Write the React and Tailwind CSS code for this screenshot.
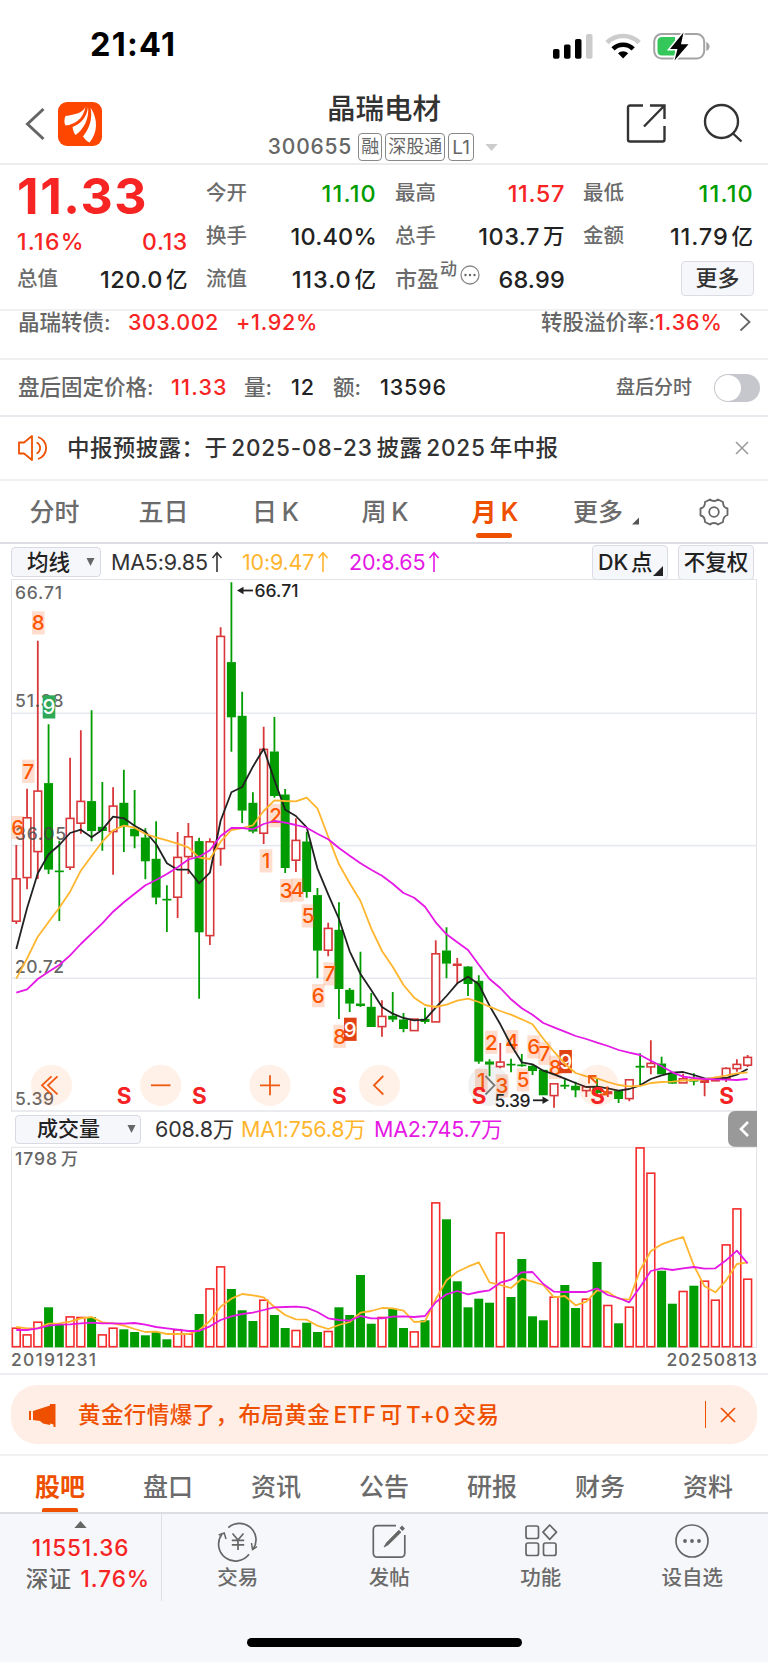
import React from "react";

const X0 = 16.3;
const STEP = 10.755;
const cx = (i) => X0 + i * STEP;
const RED = "#d9383a";
const GREEN = "#009c00";

// Each candle: [direction, high, body top, body bottom, low] in chart canvas units.
const candles = [
  ["r", 845, 878.7, 921.3, 924], ["r", 788.7, 817.7, 877.7, 889.3], ["r", 640.7, 791, 851.7, 879],
  ["g", 724.3, 783.3, 869.3, 874], ["g", 840.7, 870.7, 871.9, 921], ["r", 757.7, 818.3, 867.3, 870],
  ["r", 730.3, 801.3, 823.3, 833.7], ["g", 710.3, 801.3, 830.7, 841.3], ["g", 782, 827, 830.7, 850.7],
  ["r", 787.3, 806, 831.7, 874.7], ["g", 769.7, 803, 826.3, 852], ["g", 790, 829, 836, 848.3],
  ["g", 828.3, 837.7, 861, 879.3], ["g", 821.3, 859, 897.3, 904.3], ["g", 885.3, 899, 900.2, 932],
  ["r", 832, 857.3, 897.3, 918], ["r", 823, 836.7, 856.7, 874], ["g", 837.7, 841.3, 932, 998.7],
  ["r", 838.3, 841.7, 935.7, 945], ["r", 627.3, 636.3, 848.7, 865.7], ["g", 582.3, 662.3, 717, 751.7],
  ["g", 691.7, 716, 810.3, 823], ["g", 792.3, 803, 831.3, 833.3], ["r", 726.7, 749.3, 833.3, 844],
  ["g", 717, 751.7, 795.7, 797.7], ["g", 789, 794.7, 867.7, 873], ["r", 818.3, 840.3, 860.3, 872],
  ["g", 831.7, 841.7, 891.7, 897.7], ["g", 888, 895.3, 950.3, 978.3], ["r", 922.7, 928.3, 950.3, 956.3],
  ["g", 902.3, 930, 988.7, 1019], ["g", 988, 990, 1003.3, 1012], ["g", 951.7, 1003.7, 1005.7, 1007],
  ["g", 993, 1007, 1026.7, 1026.7], ["r", 1000.3, 1016.3, 1026.7, 1036.7], ["g", 992, 1016, 1019.3, 1022],
  ["g", 1013, 1019.7, 1028.7, 1032.3], ["r", 1019, 1019, 1030.7, 1030.7], ["g", 1007.7, 1019, 1021.7, 1023.7],
  ["r", 940.3, 953.7, 1022, 1022], ["g", 927.3, 950.7, 963.3, 978.3], ["r", 958, 963.7, 965.7, 983.3],
  ["g", 966, 966.7, 983.7, 996], ["g", 975.3, 981, 1061.3, 1063.7], ["g", 1059.3, 1061.7, 1064.3, 1076.3],
  ["r", 1043, 1062, 1066.7, 1068.3], ["g", 1058.7, 1064, 1065, 1072.3], ["g", 1054, 1064.7, 1065.7, 1066.7],
  ["g", 1064.3, 1066, 1070.7, 1075], ["g", 1070, 1070, 1095, 1095], ["r", 1083.7, 1083.7, 1095.7, 1107.7],
  ["g", 1079.3, 1085, 1086.3, 1089], ["g", 1081.7, 1086, 1090, 1097.3], ["r", 1086.7, 1086.7, 1090.7, 1097],
  ["g", 1078.7, 1086.7, 1092.7, 1096], ["r", 1086.7, 1091.3, 1094, 1097], ["g", 1090, 1090.7, 1098.7, 1103],
  ["r", 1079.3, 1079.7, 1098.7, 1101.3], ["g", 1053.3, 1066, 1067.3, 1086.3], ["r", 1040.3, 1063.3, 1067, 1074.3],
  ["g", 1056.7, 1063.7, 1074, 1074], ["g", 1072.7, 1074, 1083.3, 1084], ["r", 1073.7, 1078.7, 1083, 1083],
  ["g", 1073.3, 1079, 1081.3, 1085.3], ["r", 1079.3, 1080, 1082.7, 1096.3], ["r", 1076.7, 1079.7, 1081.3, 1081.3],
  ["r", 1067.3, 1068.3, 1078.7, 1082], ["r", 1059.3, 1064.3, 1068.7, 1071.7], ["r", 1055, 1057.3, 1065.3, 1067],
];

const ma5 = [949, 908, 873.3, 854.3, 845, 833, 829.7, 837.3, 829.7, 816.7, 818.3, 825.7, 831.7, 844, 863.3, 869.7, 869.7, 883.3, 872.7, 820.7, 792.3, 787, 766.7, 748.7, 780, 809.7, 816, 827.3, 868.3, 894.3, 919, 951.3, 974, 990, 1007, 1013.7, 1018, 1020.3, 1019.7, 1007.7, 996, 983.3, 976.7, 984.3, 1005.7, 1024.3, 1045, 1062.3, 1064.3, 1070.7, 1074.3, 1078.7, 1083, 1087, 1086.7, 1088.3, 1090.7, 1089, 1085.3, 1079, 1075.3, 1072.7, 1072, 1075, 1078.3, 1078.7, 1078, 1074.7, 1069];
const ma10 = [978.7, 958.3, 936.7, 922, 907.7, 891.7, 870.7, 856, 841.7, 830.3, 825.7, 827.7, 834, 837.3, 840.3, 843.7, 847.3, 857.7, 859, 841.7, 830, 828, 825.3, 811, 800.3, 801, 801.3, 797.7, 808.3, 836.7, 864.3, 883.3, 901, 928.3, 951, 966.7, 985, 997.7, 1005, 1007, 1004.7, 1000.7, 998.7, 1002, 1006.7, 1011, 1014.7, 1019.3, 1024.3, 1038.7, 1051.7, 1063.7, 1073, 1076.3, 1078.3, 1082, 1085, 1086.3, 1086, 1083, 1082, 1081.7, 1080.7, 1080, 1079.3, 1077.3, 1075.7, 1073.3, 1072.3];
const ma20 = [992.7, 989.3, 979, 971.7, 965, 955.3, 944, 933.7, 923.3, 911.7, 902.3, 893.7, 885.3, 880, 874, 867.3, 859.5, 856.7, 850.3, 836, 828, 828, 829.3, 824, 821, 822.7, 825, 827.7, 833.7, 839.3, 848, 855.7, 863.3, 869.7, 875.7, 883.7, 893, 897.7, 906.7, 922.3, 934.3, 942.3, 950, 964.7, 979, 988, 999.3, 1008.3, 1014.7, 1023, 1027.3, 1031.7, 1036, 1039, 1042.7, 1046, 1050, 1052.7, 1055, 1060.7, 1066.3, 1072.3, 1076.7, 1078, 1079, 1079.3, 1079.7, 1080, 1079];

// Top of each volume bar.
const volTops = [1328, 1334.7, 1322, 1307.3, 1324.3, 1316.7, 1317.3, 1317.3, 1334.7, 1328, 1329.3, 1332, 1335.3, 1332, 1339.3, 1329.7, 1333.7, 1314, 1288.7, 1266.7, 1289, 1310.3, 1321, 1300, 1315, 1328, 1330.3, 1322.7, 1332, 1331.3, 1307.3, 1315, 1275, 1323.7, 1317.3, 1308.7, 1328, 1331.7, 1320.3, 1202.7, 1219.3, 1281.3, 1307.3, 1298.7, 1302.7, 1232.7, 1297, 1259, 1316.3, 1320.3, 1297, 1285, 1308, 1299, 1262, 1305.3, 1323.3, 1307, 1147.7, 1173, 1270.7, 1303.7, 1291.3, 1285.7, 1281, 1300, 1244.7, 1208.7, 1279];
const volColors = "rrrggrrgrrgggggrrgrrgggrggrggrggggrggrgrgggggrggggrggrgrgrrrggrgrrrrr".split("");
const volMa1 = [651, 655, 655, 641, 640, 635, 625, 621, 637, 640, 647, 657, 666, 665, 672, 672, 672, 661, 633, 590, 566, 552, 556, 562, 591, 615, 628, 629, 647, 657, 645, 636, 608, 603, 594, 595, 602, 636, 634, 568, 511, 485, 470, 457, 517, 525, 534, 506, 515, 525, 562, 558, 586, 575, 541, 546, 566, 569, 480, 424, 403, 391, 381, 467, 529, 547, 511, 462, 457];
const volMa2 = [660, 660, 655, 647, 644, 643, 640, 638, 640, 640, 641, 639, 644, 651, 655, 659, 663, 663, 649, 630, 619, 612, 608, 600, 592, 591, 590, 593, 606, 625, 630, 632, 618, 625, 625, 620, 619, 621, 618, 577, 553, 543, 553, 546, 541, 518, 509, 487, 486, 522, 545, 546, 546, 546, 535, 555, 564, 577, 531, 483, 475, 480, 475, 471, 476, 475, 451, 422, 460];

const line = (ys) => ys.map((y, i) => `${cx(i).toFixed(1)},${y}`).join(" ");
const volLine = (ys) => line(ys.map((v) => (1110 + v / 3).toFixed(1)));

const counts = [
  ["6", 11.5, 816], ["7", 22, 759.7], ["8", 32, 611.3], ["9", 42.7, 695.3, "#2fa858"],
  ["1", 259.7, 849.3], ["2", 269.3, 804], ["3", 280, 879], ["4", 291.3, 878.3], ["5", 301.7, 904.3],
  ["6", 312, 984], ["7", 323.3, 962.3], ["8", 333.3, 1024.7], ["9", 344, 1017.7, "#e04214"],
  ["1", 475, 1069], ["2", 485, 1030.7], ["3", 495.7, 1074.3], ["4", 505.7, 1030], ["5", 516.7, 1068.3],
  ["6", 527.3, 1035.3], ["7", 538.3, 1041.7], ["8", 549, 1055.7], ["9", 559.3, 1050, "#e04214"],
];

function AxisText({ x, y, w, children }) {
  return (
    <text x={x} y={y + 6.3} textLength={w} fontSize="17.5" fontWeight="500" fill="#444" fillOpacity="0.82">{children}</text>
  );
}

function PriceChart() {
  return (
    <svg viewBox="0 579 768 532" className="block h-[532px] w-[768px] overflow-visible">
      <path d="M11.5 1111V579.5H756.5V1111" fill="none" stroke="#e3e4ea" />
      <path d="M11 1111H757" stroke="#e3e4ea" strokeWidth="1.5" />
      {[713.2, 845.6, 978.2].map((y) => <path key={y} d={`M12 ${y}H756`} stroke="#e6e9f0" strokeWidth="1.6" />)}
      {candles.map(([c, h, t, b, l], i) => {
        const x = cx(i);
        const col = c === "r" ? RED : GREEN;
        const hh = Math.max(b - t, 1.2);
        return (
          <g key={i}>
            <path d={`M${x} ${h}V${t}M${x} ${b}V${l}`} stroke={col} strokeWidth="1.8" />
            {c === "r" && hh > 3.5
              ? <rect x={x - 3.8} y={t + 0.1} width="7.6" height={hh - 0.2} fill="#fff" stroke={col} strokeWidth="1.6" />
              : <rect x={x - 4.5} y={t - 0.2} width="9" height={hh + 0.5} fill={col} />}
          </g>
        );
      })}
      <AxisText x={15} y={593} w={47}>66.71</AxisText>
      <AxisText x={15} y={700.5} w={48.5}>51.38</AxisText>
      <AxisText x={15} y={833.5} w={51}>36.05</AxisText>
      <AxisText x={15} y={966.5} w={49}>20.72</AxisText>
      <AxisText x={15} y={1099} w={39}>5.39</AxisText>
      <g fontSize="20.5" fontWeight="500" textAnchor="middle">
        {counts.map(([n, x, y, bg], i) => (
          <g key={i}>
            <rect x={x} y={y} width="12.6" height="23.2" fill={bg || "#ff5a10"} fillOpacity={bg ? 1 : 0.2} />
            <text x={x + 6.3} y={y + 19} fill={bg ? "#fff" : "#ff5500"}>{n}</text>
          </g>
        ))}
      </g>
      <g fill="none" strokeWidth="1.8" strokeLinejoin="round">
        <polyline points={line(ma5)} stroke="#222" />
        <polyline points={line(ma10)} stroke="#ffb52e" />
        <polyline points={line(ma20)} stroke="#e518e5" />
      </g>
      <g fontSize="17.5" fontWeight="500" fill="#222">
        <path d="M242 590.5H253" stroke="#222" strokeWidth="1.8" />
        <path d="M237 590.5L243.5 586.8V594.2Z" />
        <text x="254.5" y="597" textLength="44">66.71</text>
        <text x="494.5" y="1107" textLength="36">5.39</text>
        <path d="M533 1100.3H544" stroke="#222" strokeWidth="1.8" />
        <path d="M549 1100.3L542.5 1096.6V1104Z" />
      </g>
      {[51.5, 160.7, 270, 379.5, 488.7, 598].map((x, i) => (
        <circle key={x} cx={x} cy="1085.3" r="20.6" fill={i === 4 ? "#777" : "#ff6a20"} fillOpacity="0.1" />
      ))}
      <g fill="none" stroke="#f05a10" strokeWidth="1.8">
        <path d="M51.5 1076.3L42 1085.3L51.5 1094.3M57.5 1076.3L48 1085.3L57.5 1094.3" />
        <path d="M151 1085.3H170.5" />
        <path d="M260 1085.3H280M270 1075.3V1095.3" />
        <path d="M383.3 1076L374 1085.3L383.3 1094.5" />
        <path d="M485.5 1076L494.5 1085.3L485.5 1094.5" stroke="#777" />
        <path d="M589 1083.5V1076H596.5M589 1076L597 1083.5M607 1086.5V1094.5H600M607 1094.5L599.5 1087.5" />
      </g>
      <g fontSize="22.5" fontWeight="700" fill="#f52323" textAnchor="middle">
        {[124, 199.3, 339.3, 479, 597.7, 726.7].map((x) => <text key={x} x={x} y="1103.9">S</text>)}
      </g>
    </svg>
  );
}

function VolumeChart() {
  return (
    <svg viewBox="0 1147 768 201" className="block h-[201px] w-[768px] overflow-visible">
      <path d="M11.5 1347.5V1147.3H756.5V1347.5Z" fill="none" stroke="#e3e4ea" />
      <text x="15" y="1165" textLength="42" fontSize="17.5" fontWeight="500" fill="#666">1798</text>
      <text x="61" y="1165" fontSize="17" fontWeight="500" fill="#666">万</text>
      {volTops.map((t, i) =>
        volColors[i] === "r"
          ? <rect key={i} x={cx(i) - 3.9} y={t + 0.2} width="7.8" height={1346.5 - t} fill="#fff" stroke="#f52c2c" strokeWidth="1.6" />
          : <rect key={i} x={cx(i) - 4.5} y={t} width="9" height={1347.3 - t} fill={GREEN} />
      )}
      <g fill="none" strokeWidth="1.8" strokeLinejoin="round">
        <polyline points={volLine(volMa1)} stroke="#ffb52e" />
        <polyline points={volLine(volMa2)} stroke="#e518e5" />
      </g>
    </svg>
  );
}

function StatusBar() {
  return (
    <div className="flex h-[86px] items-center justify-between pl-[90px] pr-[58px] pt-[5px]">
      <span className="text-[32.5px] font-bold tracking-[1.2px] text-black">21:41</span>
      <svg viewBox="552 30 158 30" className="h-[30px] w-[158px]">
        <rect x="553" y="48" width="6.5" height="9.8" rx="1.8" />
        <rect x="564" y="43.5" width="6.5" height="14.3" rx="1.8" />
        <rect x="575" y="38" width="6.5" height="19.8" rx="1.8" />
        <rect x="586" y="33" width="6.5" height="24.8" rx="1.8" fill="#ccc" />
        <g fill="none" strokeWidth="4.6">
          <path d="M607 41.5A23 23 0 0 1 639.2 41.5" stroke="#ccc" />
          <path d="M613 47.8A14.5 14.5 0 0 1 633.2 47.8" stroke="#000" />
        </g>
        <path d="M618 52.3A7.5 7.5 0 0 1 628.2 52.3L623.1 57.6Z" />
        <rect x="654.2" y="33" width="50" height="24.6" rx="7.5" fill="#fff" stroke="#a3a3a3" strokeWidth="2" />
        <path d="M662 36H675V54.5H662Q657.5 54.5 657.5 50V40.5Q657.5 36 662 36Z" fill="#34c759" />
        <path d="M706.3 41V50Q709.5 48.5 709.5 45.5Q709.5 42.5 706.3 41Z" fill="#a3a3a3" />
        <path d="M683.5 31.5L670 48H677.5L674.5 59.5L688.5 43.2H681Z" stroke="#fff" strokeWidth="3" paintOrder="stroke" />
      </svg>
    </div>
  );
}

function Header() {
  return (
    <div className="grid h-[79px] grid-cols-[1fr_260px_1fr] border-b-2 border-[#ececee]">
      <div className="flex items-center gap-[13px] pb-px pl-[25px]">
        <svg viewBox="0 0 20 34" className="h-[34px] w-[20px]" fill="none" stroke="#666" strokeWidth="3">
          <path d="M18.5 2L2.5 17L18.5 32" />
        </svg>
        <svg viewBox="0 0 44 44" className="h-[44px] w-[44px]">
          <rect width="44" height="44" rx="9" fill="#ff4600" />
          <g fill="#fff">
            <path d="M27.500 4.500C25 11 17 12.500 7.500 14C6 17.500 6 21 7.500 23.500C17 22.500 25.500 17 27.500 4.500Z" />
            <path d="M30 4.500C29.500 15 22 22.500 14.500 25C15 28.500 16 31 17.500 33C25.500 27.500 31.500 17 30 4.500Z" />
            <path d="M32.500 5.500C35 17 31 27 25 34.500C27 37.500 29 39.500 31.500 40.500C39.500 31 40.500 17.500 32.500 5.500Z" />
          </g>
        </svg>
      </div>
      <div className="flex flex-col items-center">
        <div className="mt-[4px] h-[38px] text-[28.5px] font-medium leading-[38px] text-[#333]">晶瑞电材</div>
        <div className="mt-[5px] flex h-[28px] items-center text-[#666]">
          <span className="-ml-[2px] mr-[6px] text-[21px] font-medium leading-[28px] tracking-[0.8px]">300655</span>
          <span className="mr-[3px] flex h-[28px] w-[24px] items-center justify-center rounded-[4px] border-[1.5px] border-[#888] text-[18px] leading-none">融</span>
          <span className="mr-[3px] flex h-[28px] w-[60px] items-center justify-center rounded-[4px] border-[1.5px] border-[#888] text-[18px] leading-none">深股通</span>
          <span className="flex h-[28px] w-[26px] items-center justify-center rounded-[4px] border-[1.5px] border-[#888] text-[19px] leading-none">L1</span>
          <svg viewBox="0 0 14 8" className="ml-[11px] h-[7px] w-[13px] fill-[#ccc]"><path d="M0 0H14L7 8Z" /></svg>
        </div>
      </div>
      <div className="flex items-center justify-end gap-[37px] pb-[3px] pr-[25px]">
        <svg viewBox="0 0 40 40" className="h-[40px] w-[40px]" fill="none" stroke="#333" strokeWidth="2.4">
          <path d="M17 2.500H4Q2 2.500 2 4.500V36.500Q2 38.500 4 38.500H36.500Q38.500 38.500 38.500 36.500V23" />
          <path d="M24 2.500H38.500V16M38.500 2.500L18 23.500" />
        </svg>
        <svg viewBox="0 0 40 40" className="h-[40px] w-[40px]" fill="none" stroke="#333" strokeWidth="2.4">
          <circle cx="18.500" cy="18.500" r="16.500" />
          <path d="M29.500 30L38.500 38.500" />
        </svg>
      </div>
    </div>
  );
}

function Stat({ label, value, unit, tone, track }) {
  return (
    <div className="flex h-[43px] items-center justify-between">
      <span className="text-[20.5px] font-medium text-[#6b6b6b]">{label}</span>
      <span className={`flex items-center whitespace-nowrap text-[23.5px] font-medium ${tone || "text-[#222]"} ${track || "tracking-[0.2px]"}`}>
        {value}{unit && <span className="ml-[3px] text-[21.5px]">{unit}</span>}
      </span>
    </div>
  );
}

function Quote() {
  return (
    <div className="grid h-[146px] grid-cols-[171px_171px_170px_171px] gap-x-[18px] border-b-2 border-[#f0f0f3] pl-[17px] pt-[7px]">
      <div>
        <div className="h-[49px] text-[50px] font-bold leading-[49px] tracking-[1.6px] text-[#f72424]">11.33</div>
        <div className="flex h-[43px] items-center justify-between text-[23px] font-medium text-[#f72424]">
          <span className="tracking-[1.3px]">1.16%</span><span className="tracking-[0.7px]">0.13</span>
        </div>
        <div className="-mt-[6px]"><Stat label="总值" value="120.0" unit="亿" track="tracking-[0.5px]" /></div>
      </div>
      <div>
        <Stat label="今开" value="11.10" tone="text-[#009c00]" track="tracking-[1.2px]" />
        <Stat label="换手" value="10.40%" />
        <Stat label="流值" value="113.0" unit="亿" track="tracking-[0.9px]" />
      </div>
      <div>
        <Stat label="最高" value="11.57" tone="text-[#f72424]" track="tracking-[0.6px]" />
        <Stat label="总手" value="103.7" unit="万" track="tracking-[0.5px]" />
        <div className="flex h-[43px] items-center font-medium text-[#6b6b6b]">
          <span className="text-[22px]">市盈</span>
          <span className="-mt-[20px] ml-[1px] text-[17px]">动</span>
          <svg viewBox="0 0 20 20" className="-mt-[10px] ml-[3px] h-[20px] w-[20px]">
            <circle cx="10" cy="10" r="9" fill="none" stroke="#888" strokeWidth="1.3" />
            <g fill="#666"><circle cx="5.5" cy="10" r="1.2" /><circle cx="10" cy="10" r="1.2" /><circle cx="14.5" cy="10" r="1.2" /></g>
          </svg>
          <span className="ml-auto text-[23.5px] tracking-[0.2px] text-[#222]">68.99</span>
        </div>
      </div>
      <div>
        <Stat label="最低" value="11.10" tone="text-[#009c00]" track="tracking-[1.2px]" />
        <Stat label="金额" value="11.79" unit="亿" track="tracking-[0.9px]" />
        <div className="flex h-[40px] items-center justify-end">
          <button className="h-[35px] w-[73px] rounded-[4px] border border-[#dcdde4] bg-[#f6f7fb] text-[22px] font-medium leading-[32px] text-[#333]">更多</button>
        </div>
      </div>
    </div>
  );
}

function Tri({ className }) {
  return <svg viewBox="0 0 10 10" className={className}><path d="M0 0H10L5 10Z" /></svg>;
}

function Up() {
  return (
    <svg viewBox="0 0 12 22" className="ml-[3px] h-[22px] w-[12px]" fill="none" stroke="currentColor" strokeWidth="1.6">
      <path d="M6 21V2M1.500 7L6 1.800L10.500 7" />
    </svg>
  );
}

const periods = [["分时", "w-[109px]"], ["五日", "w-[109px]"], ["日 K", "w-[115px]"], ["周 K", "w-[104px]"], ["月 K", "w-[116px]"]];
const sections = ["股吧", "盘口", "资讯", "公告", "研报", "财务", "资料"];

const tools = [
  ["交易", (
    <g key="t">
      <path d="M9.300 5.700A16.500 16.500 0 0 1 34 27.300M30 32.300A16.500 16.500 0 0 1 3 12" />
      <path d="M-0.300 13L5.200 11L7 17M38 24.700L33.500 27.500L32.500 21" strokeWidth="1.500" />
      <path d="M13.500 11.500L19 18L24.500 11.500M12.800 18.300H25.200M12.800 22.800H25.200M19 18V28" />
    </g>
  )],
  ["发帖", (
    <g key="p">
      <path d="M26 3.700H7.500Q3.300 3.700 3.300 8V31Q3.300 35.200 7.500 35.200H30.500Q34.800 35.200 34.800 31V13" />
      <path d="M14 25L16.500 20.800L28.800 8.200L31 10.300L18.200 22.800Z" fill="#666" strokeWidth="0.800" />
      <path d="M31 7.500L33.500 5" strokeWidth="4" />
    </g>
  )],
  ["功能", (
    <g key="f">
      <rect x="4" y="4" width="12.5" height="12.5" rx="2" /><rect x="4" y="21" width="12.5" height="12.5" rx="2" />
      <rect x="21.5" y="21" width="12.5" height="12.5" rx="2" /><path d="M27.700 3L34.500 10.200L27.700 17.300L21 10.200Z" strokeLinejoin="round" />
    </g>
  )],
  ["设自选", (
    <g key="s">
      <circle cx="19" cy="19" r="16" />
      <g fill="#666" stroke="none"><circle cx="12" cy="19" r="1.9" /><circle cx="19" cy="19" r="1.9" /><circle cx="26" cy="19" r="1.9" /></g>
    </g>
  )],
];

export default function App() {
  return (
    <div className="h-[1662px] w-[768px] overflow-hidden whitespace-nowrap bg-white font-['Inter','Noto_Sans_CJK_SC',sans-serif]">
      <StatusBar />
      <Header />
      <Quote />

      <div className="flex h-[49px] items-start border-b-2 border-[#f0f0f3] pl-[18px] text-[21.5px] font-medium leading-[23px] text-[#f72424]">
        <span className="w-[110px] text-[#666]">晶瑞转债:</span>
        <span className="w-[108px] tracking-[0.5px]">303.002</span>
        <span className="tracking-[0.7px]">+1.92%</span>
        <span className="ml-auto text-[#666]">转股溢价率:</span>
        <span className="w-[66px] tracking-[0.9px]">1.36%</span>
        <svg viewBox="0 0 12 20" className="ml-[18px] mr-[17px] mt-[1px] h-[20px] w-[12px]" fill="none" stroke="#666" strokeWidth="1.8"><path d="M1.500 1.500L10.500 10L1.500 18.500" /></svg>
      </div>

      <div className="flex h-[57px] items-center border-b-2 border-[#e8e9ee] pl-[18px] text-[21.5px] font-medium text-[#222]">
        <span className="w-[153px] text-[#666]">盘后固定价格:</span>
        <span className="w-[73px] tracking-[1.2px] text-[#f72424]">11.33</span>
        <span className="w-[47px] text-[#666]">量:</span>
        <span className="w-[42px] tracking-[0.8px]">12</span>
        <span className="w-[47px] text-[#666]">额:</span>
        <span className="tracking-[0.8px]">13596</span>
        <span className="ml-auto mt-[2px] text-[19px] text-[#666]">盘后分时</span>
        <span className="ml-[22px] mr-[8px] flex h-[28px] w-[46px] items-center rounded-full bg-[#c6c7cd] p-[1px]">
          <span className="h-[26px] w-[26px] rounded-full bg-white" />
        </span>
      </div>

      <div className="flex h-[64px] items-center border-b-2 border-[#f0f0f3] pl-[17px] pr-[19px]">
        <svg viewBox="0 0 32 28" className="mr-[18px] h-[28px] w-[32px]" fill="none" stroke="#ee5000" strokeWidth="1.8" strokeLinejoin="round">
          <path d="M2 8.500H7L15 2V26L7 19.500H2Z" />
          <path d="M19.500 8.500A6 6 0 0 1 19.500 19.500M21 3A11.500 11.500 0 0 1 21 25" />
        </svg>
        <span className="text-[22.5px] font-medium tracking-[0.4px] text-[#333] [word-spacing:-2.5px]">
          中报预披露：于 <span className="tracking-[0.85px]">2025-08-23</span> 披露 <span className="tracking-[0.85px]">2025</span> 年中报
        </span>
        <svg viewBox="0 0 14 14" className="ml-auto h-[14px] w-[14px]" stroke="#999" strokeWidth="1.5"><path d="M1 1L13 13M13 1L1 13" /></svg>
      </div>

      <div className="flex h-[63px] items-center border-b-2 border-[#dcdde3] text-[25px] font-medium text-[#6b6b6b]">
        {periods.map(([name, w], i) => (
          <div key={name} className={`relative flex h-full items-center justify-center pt-[2px] [word-spacing:-2px] ${w} ${i === 4 ? "font-semibold text-[#ee5000]" : ""}`}>
            {name}
            {i === 4 && <span className="absolute bottom-[4px] left-[39px] h-[5px] w-[36px] rounded-full bg-[#ee5000]" />}
          </div>
        ))}
        <span className="ml-[20px] pt-[2px]">更多</span>
        <svg viewBox="0 0 8 8" className="ml-[9px] mt-[18px] h-[8px] w-[7px] fill-[#555]"><path d="M8 0V8H0Z" /></svg>
        <svg viewBox="0 0 30 30" className="ml-[60px] mt-[1px] h-[30px] w-[30px]" fill="none" stroke="#666" strokeWidth="1.8" strokeLinejoin="round">
          <path d="M11 2.500C13 4.500 17 4.500 19 2.500L24 5C24 9 25.500 11 28.500 11.500V18C25.500 19 24 21 24 25L19 27.500C17 25.500 13 25.500 11 27.500L6 25C6 21 4.500 19 1.500 18.500V11.500C4.500 11 6 9 6 5Z" />
          <circle cx="15" cy="15" r="4.8" />
        </svg>
      </div>

      <div className="flex h-[35px] items-center pl-[11px] pt-px text-[21.5px]">
        <button className="flex h-[30px] w-[90px] items-center rounded-[4px] border border-[#d8d9e2] bg-[#f6f7fb] pl-[15px] font-medium text-[#222]">
          均线<Tri className="ml-[16px] h-[8px] w-[9px] fill-[#666]" />
        </button>
        <span className="ml-[10px] flex w-[131px] items-center tracking-[-0.2px] text-[#333]">MA5:9.85<Up /></span>
        <span className="flex w-[107px] items-center tracking-[-0.2px] text-[#ffb52e]">10:9.47<Up /></span>
        <span className="flex items-center tracking-[-0.2px] text-[#e518e5]">20:8.65<Up /></span>
        <button className="relative ml-auto h-[35px] w-[76px] rounded-[4px] border border-[#dcdde4] bg-[#f6f7fb] pl-[5px] text-left font-medium text-[#222] [word-spacing:-3px]">
          DK 点
          <svg viewBox="0 0 10 10" className="absolute bottom-[3px] right-[4px] h-[10px] w-[10px] fill-[#222]"><path d="M10 0V10H0Z" /></svg>
        </button>
        <button className="ml-[10px] mr-[14px] h-[35px] w-[76px] rounded-[4px] border border-[#dcdde4] bg-[#f6f7fb] font-medium text-[#222]">不复权</button>
      </div>

      <PriceChart />

      <div className="flex h-[36px] items-center pl-[15px] pr-[11px] text-[21.5px] tracking-[-0.2px]">
        <button className="flex h-[29px] w-[126px] items-center rounded-[4px] border border-[#d8d9e2] bg-[#f6f7fb] pl-[21px] text-[21px] font-medium tracking-normal text-[#222]">
          成交量<Tri className="ml-[27px] h-[8px] w-[9px] fill-[#666]" />
        </button>
        <span className="ml-[14px] w-[86px] pt-px text-[#333]">608.8万</span>
        <span className="w-[133px] pt-px text-[#ffb52e]">MA1:756.8万</span>
        <span className="pt-px text-[#e518e5]">MA2:745.7万</span>
        <button className="ml-auto flex h-[36px] w-[29px] items-center justify-center rounded-l-[7px] bg-[#999]">
          <svg viewBox="0 0 10 16" className="ml-[2px] h-[16px] w-[10px]" fill="none" stroke="#fff" strokeWidth="2.6"><path d="M9 1L2 8L9 15" /></svg>
        </button>
      </div>

      <VolumeChart />

      <div className="flex h-[27px] items-center justify-between border-b-2 border-[#eeeef2] pl-[11px] pr-[11px] text-[17.5px] font-medium text-[#666]">
        <span className="tracking-[1.2px]">20191231</span><span className="-mr-[1px] tracking-[0.9px]">20250813</span>
      </div>

      <div className="flex h-[81px] items-center border-b-2 border-[#f2f2f4] px-[11px]">
        <div className="flex h-[59px] w-full items-center rounded-[26px] bg-[#ffeee6] pl-[17px] pr-[21px] text-[#ee5000]">
          <svg viewBox="0 0 28 26" className="mr-[22px] h-[26px] w-[28px] fill-[#ee5000]">
            <path d="M1 9H3V18H1ZM5 9L22 3.500V2H27.500V25H25.500V22.500L22 21.500V23L15 21.500L12 19L5 18Z" />
          </svg>
          <span className="text-[22.5px] font-medium tracking-[0.42px] [word-spacing:-3px]">黄金行情爆了，布局黄金 ETF 可 T+0 交易</span>
          <span className="ml-auto mr-[14px] h-[27px] w-[1.5px] bg-[#ee5000]" />
          <svg viewBox="0 0 16 16" className="h-[16px] w-[16px]" stroke="#ee5000" strokeWidth="1.7"><path d="M1 1L15 15M15 1L1 15" /></svg>
        </div>
      </div>

      <div className="grid h-[58px] grid-cols-7 border-b-2 border-[#dcdde3] px-[6px] text-[25px] font-medium text-[#6b6b6b]">
        {sections.map((s, i) => (
          <div key={s} className={`relative flex items-center justify-center pt-[8px] ${i === 0 ? "font-bold text-[#ee5000]" : ""}`}>
            {s}
            {i === 0 && <span className="absolute bottom-0 left-[36px] h-[4px] w-[36px] rounded-t-[2px] bg-[#ee5000]" />}
          </div>
        ))}
      </div>

      <div className="flex h-[148px] flex-col items-center bg-[#f6f7fa]">
        <div className="flex h-[87px] w-full">
          <div className="flex w-[162px] flex-col items-center border-r border-[#dfe0e5] text-[22.5px] font-medium text-[#f72424]">
            <svg viewBox="0 0 14 8" className="mt-[7px] h-[7px] w-[13px] fill-[#666]"><path d="M0 8H14L7 0Z" /></svg>
            <div className="mt-[4px] h-[31px] leading-[31px] tracking-[0.9px]">11551.36</div>
            <div className="flex h-[31px] items-center pl-[15px] leading-[31px] tracking-[1px]"><span className="mr-[9px] tracking-[0.3px] text-[#666]">深证</span>1.76%</div>
          </div>
          <div className="grid flex-1 grid-cols-4">
            {tools.map(([name, icon]) => (
              <div key={name} className="flex flex-col items-center text-[20.5px] font-medium text-[#6b6b6b]">
                <svg viewBox="0 0 38 38" className="mt-[8px] h-[38px] w-[38px] overflow-visible" fill="none" stroke="#666" strokeWidth="1.7">{icon}</svg>
                <span className="mt-[3px] leading-[30px]">{name}</span>
              </div>
            ))}
          </div>
        </div>
        <div className="mt-[37px] h-[9px] w-[275px] rounded-full bg-black" />
      </div>
    </div>
  );
}
